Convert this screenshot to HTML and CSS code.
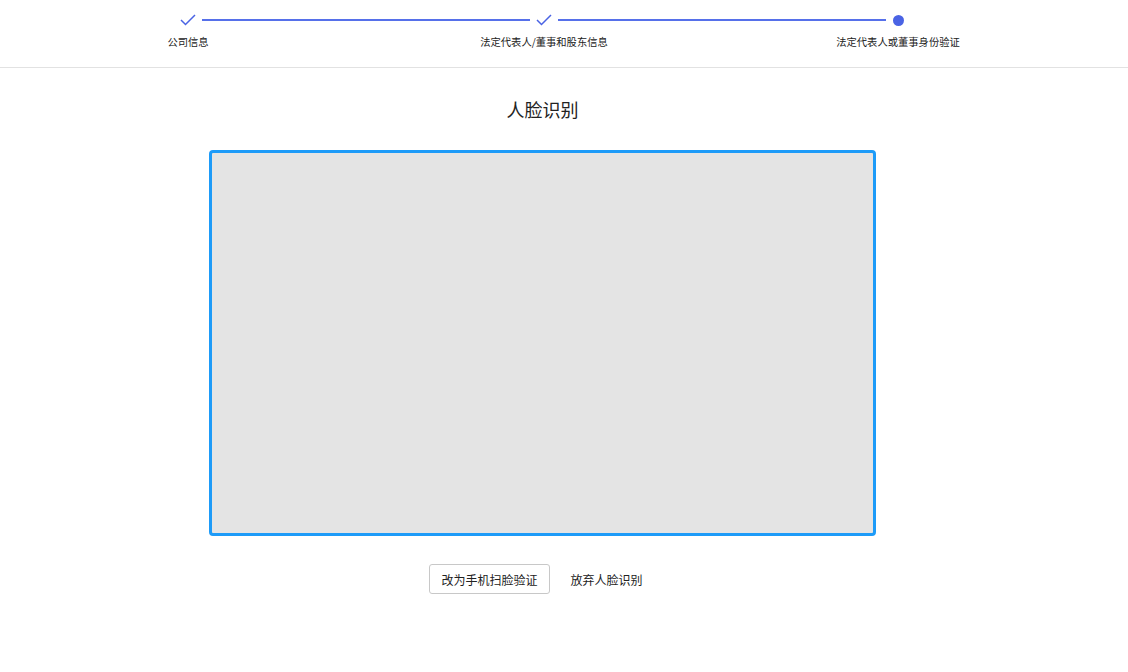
FILE: index.html
```html
<!DOCTYPE html>
<html lang="zh-CN">
<head>
<meta charset="utf-8">
<title>人脸识别</title>
<link rel="stylesheet" href="styles.css">
</head>
<body>
<div class="page">
  <header class="header">
    <div class="steps">
      <div class="icon done">
        <svg width="16" height="12" viewBox="0 0 16 12"><polyline points="1,6 5.5,10.5 15,1" fill="none" stroke="#4a63e4" stroke-width="1.5"/></svg>
      </div>
      <div class="line"></div>
      <div class="icon done">
        <svg width="16" height="12" viewBox="0 0 16 12"><polyline points="1,6 5.5,10.5 15,1" fill="none" stroke="#4a63e4" stroke-width="1.5"/></svg>
      </div>
      <div class="line"></div>
      <div class="icon current"><span class="dot"></span></div>
      <div class="label c1"><span>公司信息</span></div>
      <div class="label c3"><span>法定代表人/董事和股东信息</span></div>
      <div class="label c5"><span>法定代表人或董事身份验证</span></div>
    </div>
  </header>
  <main class="main">
    <h1 class="title">人脸识别</h1>
    <div class="camera"></div>
    <div class="actions">
      <button class="btn btn-outline">改为手机扫脸验证</button>
      <button class="btn btn-text">放弃人脸识别</button>
    </div>
  </main>
</div>
</body>
</html>
```
FILE: styles.css
```css
* { box-sizing: border-box; }
html, body {
  margin: 0;
  padding: 0;
  background: #fff;
  font-family: "Noto Sans CJK SC", "Noto Sans", "Liberation Sans", sans-serif;
  color: #222;
}
.page {
  width: 1085px;
}
.header {
  height: 68px;
  border-bottom: 1px solid #e2e2e2;
  width: 1128px;
  padding-top: 14px;
}
.steps {
  width: 724px;
  margin-left: 180px;
  display: grid;
  grid-template-columns: 16px 1fr 16px 1fr 12px;
  grid-template-rows: 12px auto;
  column-gap: 6px;
  row-gap: 9px;
}
.icon {
  display: flex;
  align-items: center;
  justify-content: center;
  height: 12px;
}
.icon svg { display: block; }
.dot {
  width: 11px;
  height: 11px;
  border-radius: 50%;
  background: #4a63e4;
}
.line {
  align-self: center;
  height: 1.5px;
  background: #5670ea;
}
.label {
  grid-row: 2;
  display: flex;
  justify-content: center;
  white-space: nowrap;
  font-size: 10.3px;
  line-height: 14px;
  color: #222;
}
.c1 { grid-column: 1; }
.c3 { grid-column: 3; }
.c5 { grid-column: 5; }
.main {
  display: flex;
  flex-direction: column;
  align-items: center;
}
.title {
  margin: 28px 0 0;
  font-size: 18px;
  line-height: 26px;
  font-weight: 400;
  color: #222;
}
.camera {
  margin-top: 28px;
  width: 667px;
  height: 386px;
  border: 3px solid #1d9bf8;
  border-radius: 4px;
  background: #e4e4e4;
}
.actions {
  margin-top: 28px;
  display: flex;
  gap: 8px;
}
.btn {
  height: 30px;
  padding: 0 11px;
  font-family: inherit;
  font-size: 12px;
  color: #222;
  background: #fff;
  border-radius: 3px;
  cursor: pointer;
}
.btn-outline { border: 1px solid #c8c8c8; }
.btn-text { border: 1px solid transparent; padding: 0 12px; }
```
